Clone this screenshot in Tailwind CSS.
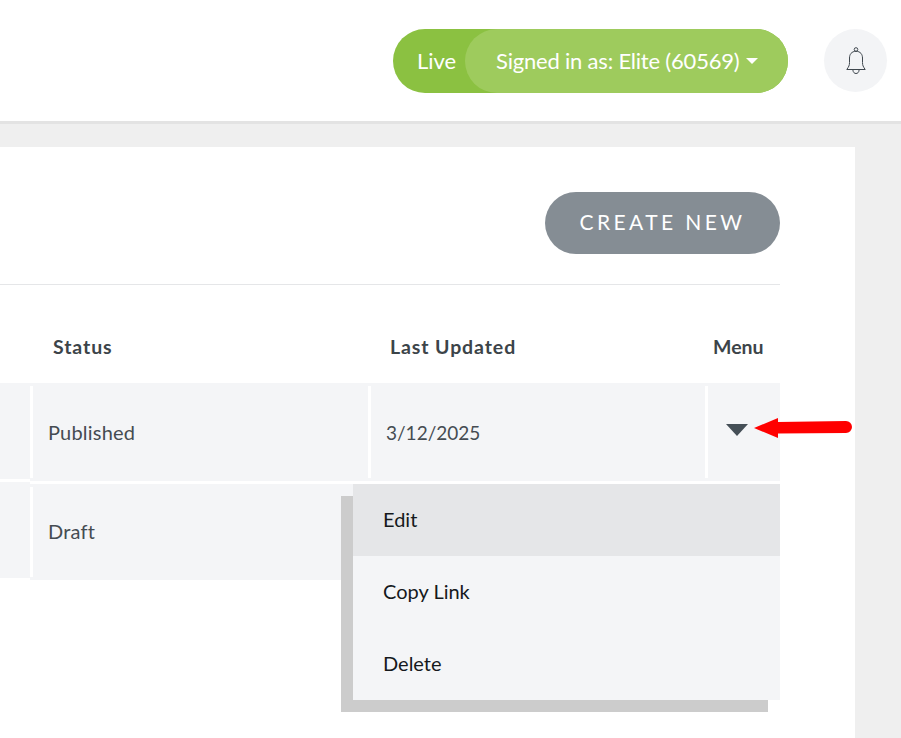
<!doctype html>
<html>
<head>
<meta charset="utf-8">
<script src="https://cdn.jsdelivr.net/npm/@tailwindcss/browser@4"></script>
</head>
<body class="bg-[#efefef] font-['Lato','Open_Sans',sans-serif] overflow-hidden">
<div class="relative w-[901px] h-[738px] overflow-hidden">
  <header class="h-[124px] bg-white border-b-[3px] border-[#e3e3e3] flex items-start justify-end pt-[29px] pr-[14px] gap-[36px]">
    <div class="h-[64px] w-[395px] rounded-full bg-[#8bc141] flex items-center text-white text-[22px]">
      <span class="w-[72px] pl-[24px] pb-[2px]">Live</span>
      <div class="h-full flex-1 rounded-full bg-[#9ecb5d] flex items-center pl-[31px] gap-[6px]">
        <span class="w-[244px] whitespace-nowrap tracking-[-0.2px] pb-[2px]">Signed in as: Elite (60569)</span>
        <span class="w-0 h-0 border-x-[6.5px] border-x-transparent border-t-[6px] border-t-white"></span>
      </div>
    </div>
    <div class="w-[63px] h-[63px] rounded-full bg-[#f3f4f6] flex items-center justify-center">
      <svg width="20" height="28" viewBox="0 0 20 28" fill="none" stroke="#3f474e" stroke-width="1"><circle cx="10" cy="2.500" r="1.800"/><path d="M10 4.300C5.500 4.300 3.500 7.500 3.500 11V15.500C3.500 18.500 2.800 19.500 0.800 22.500H19.200C17.200 19.500 16.500 18.500 16.500 15.500V11C16.500 7.500 14.500 4.300 10 4.300Z"/><path d="M6.800 22.500C7 25.500 8.500 26.500 10 26.500C11.500 26.500 13 25.500 13.200 22.500"/></svg>
    </div>
  </header>

  <main class="mt-[23px] w-[855px] h-[600px] bg-white pr-[75px] pt-[45px]">
    <div class="flex justify-end h-[93px] border-b border-[#e5e6e8]">
      <button class="h-[62px] w-[235px] rounded-full bg-[#858d94] text-white text-[21px] tracking-[3.4px] pb-[2px]">CREATE NEW</button>
    </div>
    <div class="grid grid-cols-[30px_338px_337px_75px] text-[19.500px] tracking-[0.9px] h-[98px] items-center font-bold text-[#3c4449]">
      <span></span>
      <span class="pl-[23px] pt-[25px]">Status</span>
      <span class="pl-[22px] pt-[25px]">Last Updated</span>
      <span class="pl-[8px] pt-[25px] tracking-normal">Menu</span>
    </div>
    <div class="grid grid-cols-[30px_3px_335px_3px_334px_3px_72px] h-[98px] text-[20px] tracking-[0.2px] text-[#454c52]">
      <div class="bg-[#f4f5f7] h-[96px]"></div>
      <div class="bg-[#f4f5f7] py-[3px]"><div class="bg-white h-full"></div></div>
      <div class="pl-[15px] flex items-center bg-[#f4f5f7]">Published</div>
      <div class="bg-[#f4f5f7] py-[3px]"><div class="bg-white h-full"></div></div>
      <div class="pl-[15px] pt-[2px] flex items-center bg-[#f4f5f7] text-[19px] tracking-normal">3/12/2025</div>
      <div class="bg-[#f4f5f7] py-[3px]"><div class="bg-white h-full"></div></div>
      <div class="flex items-center pl-[18px] bg-[#f4f5f7]"><span class="w-0 h-0 border-x-[11px] border-x-transparent border-t-[12px] border-t-[#454f57] -mt-[4px]"></span></div>
    </div>
    <div class="h-[3px] bg-white"></div>
    <div class="grid grid-cols-[30px_3px_335px_3px_334px_3px_72px] h-[96px] text-[20px] tracking-[0.2px] text-[#454c52]">
      <div class="bg-[#f4f5f7] h-[96px] -mt-[2px]"></div>
      <div class="bg-[#f4f5f7] pt-[3px] pb-[3px]"><div class="bg-white h-full"></div></div>
      <div class="pl-[15px] pb-[2px] flex items-center bg-[#f4f5f7]">Draft</div>
    </div>
  </main>

  <div class="absolute left-[353px] top-[484px] w-[427px] h-[216px] bg-[#f4f5f7] shadow-[-12px_12px_0_#cccccc] text-[20px] text-[#15191c]">
    <div class="h-[72px] flex items-center pl-[30px] pb-[2px] bg-[#e5e6e8]">Edit</div>
    <div class="h-[72px] flex items-center pl-[30px] pb-[2px]">Copy Link</div>
    <div class="h-[72px] flex items-center pl-[30px] pb-[2px]">Delete</div>
  </div>

  <svg class="absolute left-[750px] top-[414px]" width="106" height="28" viewBox="0 0 106 28"><path d="M4 14L28 4V24Z" fill="#ff0000"/><path d="M28 8L96 7A6 6 0 0 1 96 19L28 19.500Z" fill="#ff0000"/></svg>
</div>
</body>
</html>
